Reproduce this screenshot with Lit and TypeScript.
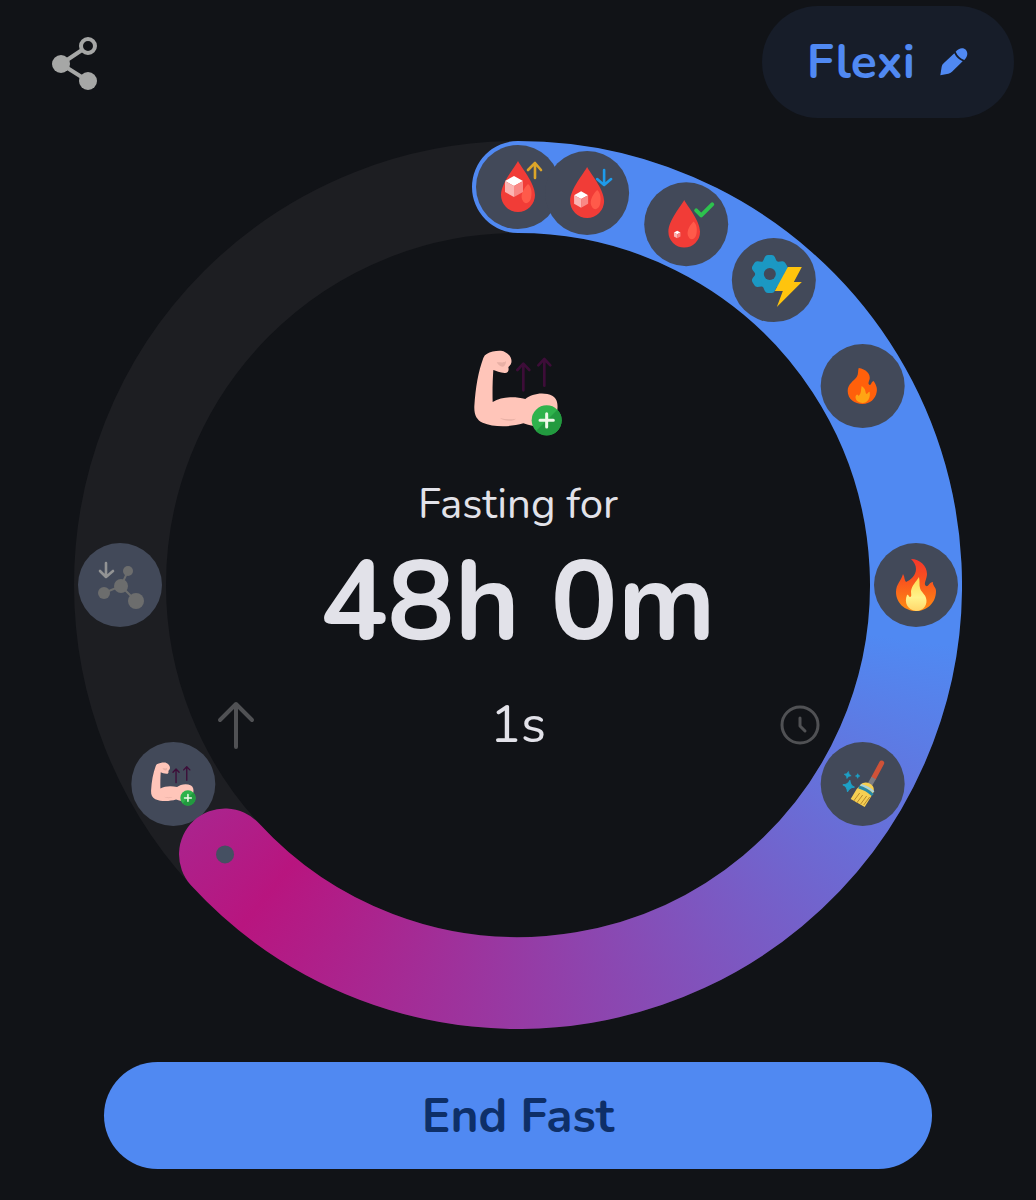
import { LitElement, css, html, svg } from "lit";
import { customElement, property } from "lit/decorators.js";

const RADIUS = 398;
const CENTER = 444;

function pointAt(angle: number) {
  const rad = (angle * Math.PI) / 180;
  return {
    x: CENTER + RADIUS * Math.sin(rad),
    y: CENTER - RADIUS * Math.cos(rad),
  };
}

const drop = svg`
  <path fill="#f13c37" d="M0-26C3-20 17-4 17 8A17 17 0 0 1-17 8C-17-4-3-20 0-26Z" />
  <path fill="#ff5a4a" d="M10-3C14 0 14 7 13 11C12 16 7 18 5 14C2 10 4 3 10-3Z" />
`;

const cube = svg`
  <path fill="#ffffff" d="M0-10L9-5L0 0L-9-5Z" />
  <path fill="#fbb5b3" d="M-9-5L0 0V11L-9 6Z" />
  <path fill="#f98885" d="M9-5L0 0V11L9 6Z" />
`;

const sugarUp = svg`
  ${drop}
  <g transform="translate(-4 -1)">${cube}</g>
  <path class="line" stroke="#dca529" stroke-width="2.6" d="M17-9V-24M10-17L17-24L23-17" />
`;

const sugarDown = svg`
  ${drop}
  <g transform="translate(-6 6) scale(0.78)">${cube}</g>
  <path class="line" stroke="#1e9beb" stroke-width="2.6" d="M17-23V-8M10-14L17-8L24-14" />
`;

const sugarNormal = svg`
  <g transform="translate(-2 0) scale(0.93)">${drop}</g>
  <g transform="translate(-9 10) scale(0.36)">${cube}</g>
  <path class="line" stroke="#2dc24e" stroke-width="4" d="M10-14L15-9L26-20" />
`;

const metabolism = svg`
  <g transform="translate(-4 -6)">
    <circle r="14" fill="#1b98c3" />
    ${[0, 60, 120, 180, 240, 300].map(
      (a) => svg`<path fill="#1b98c3" transform="rotate(${a})" d="M-9-11C-6-13-6-15-5-17Q-4-19-2-19H2Q4-19 5-17C6-15 6-13 9-11Z" />`
    )}
    <circle r="6" fill="#424959" />
  </g>
  <path fill="#ffc40d" d="M14-13H28L20 2H28L3 27L9 11H1Z" />
`;

const smallFire = svg`
  <path fill="#ff600b" d="M-4-18C3-17 8-12 7-7C6-4 5-2 7-1C9-1 8-4 11-5C13-2 15 2 14 6C13 13 7 18 0 18C-8 18-15 13-15 5C-15-2-9-5-6-9C-4-12-5-15-4-18Z" />
  <path fill="#ffa414" d="M-1 0C4 3 2 7 4 8C6 7 6 5 7 6C8 12 5 17 0 17C-5 17-8 13-7 10C-6 8-5 8-4 10C-1 7-2 4-1 0Z" />
`;

const bigFire = svg`
  <path fill="url(#flame)" d="M-5-26C4-26 11-19 11-11C11-6 7-1 10 1C13 2 13-3 17-3C16 0 20 2 20 6C20 18 11 26 0 26C-11 26-20 18-20 7C-20-1-15-4-13-11C-11-8-12-5-10-3C-5-5 0-10 0-16C0-20-2-23-5-26Z" />
  <path fill="url(#flame-core)" d="M3-8C0-3-4 0-5 6C-5 9-4 12-6 12C-8 12-7 9-9 10C-12 17-9 25 0 26C8 26 12 19 10 13C9 9 5 7 4 3C3 0 4-3 3-8Z" />
`;

const star = "M0-6Q1-1 6 0Q1 1 0 6Q-1 1-6 0Q-1-1 0-6Z";

const autophagy = svg`
  <path class="line" stroke="#cf5238" stroke-width="5" d="M19-21L11-6" />
  <path stroke="#7b7b82" stroke-width="5" d="M11-6L7 1" />
  <path fill="#f6cf52" d="M-3 2C0-3 7-2 10 2C12 5 11 8 10 10L2 23L-12 15L-6 5Z" />
  <path stroke="#b98a2d" fill="none" d="M-3 9L-9 17M0 11L-6 19M4 12L-2 20M7 13L1 21" />
  <path stroke="#aad3dc" stroke-width="2" fill="none" d="M-2 1Q6 3 11 8" />
  <path stroke="#2788a8" stroke-width="3" fill="none" d="M-4 3Q4 5 10 11" />
  <g fill="#1da0c6" stroke="#1da0c6">
    <path transform="translate(-14 2) rotate(12)" d=${star} />
    <path transform="translate(-15 -9) rotate(12) scale(0.6)" d=${star} />
    <path transform="translate(-5 -8) scale(0.4)" d=${star} />
  </g>
`;

const muscle = svg`
  <path fill="#ffc5b9" d="M-94-117C-79-127-49-129-41-124C-26-117-17-103-20-91C-22-83-27-81-29-77C-26-67-31-59-40-60C-54-61-66-66-74-69C-76-40-77-5-76 27C-49 12-14 9 22 18C41 3 76-5 104 9C118 17 120 35 118 50L111 100C76 107 41 100 16 91C-24 103-74 103-106 89C-124 81-132 65-131 40C-128-15-119-65-104-105Q-101-114-94-117Z" />
  <path fill="#e8b0a5" d="M-54 75C-38 80-22 80-6 77C-12 85-42 86-54 75ZM-64-92C-60-84-50-76-42-80C-38-84-36-88-36-96C-44-88-54-94-64-92Z" />
  <path class="line" stroke="#3d0d38" stroke-width="8" d="M16-8V-87M-2-69L16-88L34-69M79-22V-101M61-83L79-102L97-83" />
  <circle cx="86" cy="82" r="45" fill="#2fb34c" />
  <path fill="#229a3f" d="M118 50A45 45 0 0 1 54 114Z" />
  <path class="line" stroke="#eff8e9" stroke-width="9" d="M66 82H106M86 62V102" />
`;

const building = svg`<g transform="scale(0.17)">${muscle}</g>`;

const molecule = svg`
  <path stroke="#6c6d6d" stroke-width="2" fill="none" d="M8-14L1 1L-16 8M1 1L16 16" />
  <g fill="#6c6d6d">
    <circle cx="8" cy="-14" r="5" />
    <circle cx="1" cy="1" r="7" />
    <circle cx="-16" cy="8" r="6" />
    <circle cx="16" cy="16" r="8" />
  </g>
  <path class="line" stroke="#929394" stroke-width="2.6" d="M-14-22V-9M-20-14L-14-8L-7-14" />
`;

const stages = [
  { angle: 0, label: "Blood sugar rises", icon: sugarUp },
  { angle: 10, label: "Blood sugar falls", icon: sugarDown },
  { angle: 25, label: "Blood sugar normal", icon: sugarNormal },
  { angle: 40, label: "Metabolism switches", icon: metabolism },
  { angle: 60, label: "Fat burning", icon: smallFire },
  { angle: 90, label: "Ketosis", icon: bigFire },
  { angle: 120, label: "Autophagy", icon: autophagy },
  { angle: 240, label: "Growth hormone", icon: building },
  { angle: 270, label: "Insulin drops", icon: molecule },
];

@customElement("fasting-dial")
export class FastingDial extends LitElement {
  @property({ type: Number }) progress = 227.4;

  static styles = css`
    :host {
      display: grid;
      width: 100%;
      aspect-ratio: 1;
    }

    .ring,
    .content {
      grid-area: 1 / 1;
    }

    .ring {
      display: block;
      width: 100%;
      height: 100%;
    }

    .sweep {
      width: 100%;
      height: 100%;
      background: conic-gradient(
        #5089f2 0deg 98deg,
        #b8157f 219deg,
        #5089f2 340deg
      );
    }

    .line {
      fill: none;
      stroke-linecap: round;
      stroke-linejoin: round;
    }

    .content {
      display: flex;
      flex-direction: column;
      align-items: center;
      justify-content: center;
      padding-bottom: 80px;
      color: #e2e2e9;
    }

    .stage {
      width: 120px;
      height: 120px;
      margin-bottom: 24px;
    }

    p {
      margin: 0;
    }

    .caption {
      font-size: 42px;
      font-weight: 400;
      line-height: 56px;
    }

    .time {
      font-size: 112px;
      font-weight: 700;
      line-height: 140px;
    }

    .row {
      display: grid;
      grid-template-columns: 1fr auto 1fr;
      align-items: center;
      width: 68%;
      margin-top: 20px;
    }

    .seconds {
      font-size: 52px;
      font-weight: 400;
      line-height: 64px;
    }

    button {
      display: flex;
      padding: 0;
      border: 0;
      background: none;
      color: #505154;
      cursor: pointer;
    }

    button:last-child {
      justify-self: end;
    }
  `;

  renderStage(stage: (typeof stages)[number]) {
    const { x, y } = pointAt(stage.angle);
    return svg`<g transform="translate(${x} ${y})" role="img" aria-label=${stage.label}>
      <circle r="42" fill="#424959" />
      ${stage.icon}
    </g>`;
  }

  render() {
    const start = pointAt(0);
    const end = pointAt(this.progress);
    const large = this.progress > 180 ? 1 : 0;
    const arc = `M${start.x} ${start.y}A${RADIUS} ${RADIUS} 0 ${large} 1 ${end.x} ${end.y}`;

    return html`
      <svg class="ring" viewBox="0 0 888 888">
        <defs>
          <mask id="arc" maskUnits="userSpaceOnUse" x="0" y="0" width="888" height="888">
            <path class="line" stroke="#fff" stroke-width="92" d=${arc} />
          </mask>
          <linearGradient id="flame" x1="0" y1="0" x2="0" y2="1">
            <stop offset="0" stop-color="#f5372c" />
            <stop offset="0.4" stop-color="#f9521e" />
            <stop offset="1" stop-color="#ff8d12" />
          </linearGradient>
          <linearGradient id="flame-core" x1="0" y1="0" x2="0" y2="1">
            <stop offset="0" stop-color="#ffd94d" />
            <stop offset="0.6" stop-color="#fff38c" />
            <stop offset="1" stop-color="#ffd66a" />
          </linearGradient>
        </defs>
        <circle cx="444" cy="444" r="398" fill="none" stroke="#1d1e22" stroke-width="92" />
        ${stages.filter((s) => s.angle > this.progress).map((s) => this.renderStage(s))}
        <g mask="url(#arc)">
          <foreignObject width="888" height="888">
            <div class="sweep"></div>
          </foreignObject>
        </g>
        ${stages.filter((s) => s.angle <= this.progress).map((s) => this.renderStage(s))}
        <circle cx=${end.x} cy=${end.y} r="9" fill="#455062" />
      </svg>
      <div class="content">
        <svg class="stage" viewBox="-180 -180 360 360" aria-hidden="true">${muscle}</svg>
        <p class="caption">Fasting for</p>
        <p class="time">48h 0m</p>
        <div class="row">
          <button aria-label="Count up">
            <svg width="40" height="50" viewBox="0 0 40 50">
              <path class="line" stroke="currentColor" stroke-width="4" d="M20 47V4M4 20L20 4L36 20" />
            </svg>
          </button>
          <p class="seconds">1s</p>
          <button aria-label="Fast times">
            <svg width="40" height="40" viewBox="0 0 40 40">
              <circle class="line" stroke="currentColor" stroke-width="3" cx="20" cy="20" r="18" />
              <path class="line" stroke="currentColor" stroke-width="3" d="M20 13V21L25 26" />
            </svg>
          </button>
        </div>
      </div>
    `;
  }
}

@customElement("app-root")
export class AppRoot extends LitElement {
  static styles = css`
    :host {
      display: flex;
      flex-direction: column;
      box-sizing: border-box;
      min-height: 100vh;
      padding-bottom: 30px;
      background-color: #111317;
      font-family: "Nunito", "Open Sans", sans-serif;
    }

    header {
      display: flex;
      align-items: center;
      justify-content: space-between;
      padding: 6px 22px 23px 52px;
    }

    button {
      border: 0;
      font-family: inherit;
      font-size: 48px;
      font-weight: 700;
      cursor: pointer;
    }

    .share {
      display: flex;
      padding: 0;
      background: none;
      color: #a6a7a6;
    }

    .plan {
      display: flex;
      align-items: center;
      gap: 24px;
      height: 112px;
      padding: 0 45px;
      border-radius: 56px;
      background-color: #171d29;
      color: #5089f2;
    }

    main {
      padding: 0 74px;
    }

    footer {
      display: flex;
      padding: 33px 104px 0;
    }

    .end {
      flex: 1;
      height: 107px;
      border-radius: 54px;
      background-color: #5089f2;
      color: #0e2f68;
    }
  `;

  render() {
    return html`
      <header>
        <button class="share" aria-label="Share">
          <svg width="45" height="58" viewBox="0 0 45 58" fill="currentColor">
            <path stroke="currentColor" stroke-width="4" d="M30 17L9 31L36 48" fill="none" />
            <circle cx="36" cy="13" r="7" fill="none" stroke="currentColor" stroke-width="4" />
            <circle cx="9" cy="31" r="9" />
            <circle cx="36" cy="48" r="9" />
          </svg>
        </button>
        <button class="plan">
          Flexi
          <svg width="30" height="30" viewBox="572 140 90 90" fill="currentColor" aria-hidden="true">
            <path d="M576 225L580 199Q581 193 586 189L618 159Q625 175 643 183L611 214Q606 219 600 220Z" />
            <path d="M622 154C631 142 646 140 653 149C660 158 657 170 648 179Q630 172 622 154Z" />
          </svg>
        </button>
      </header>
      <main>
        <fasting-dial></fasting-dial>
      </main>
      <footer>
        <button class="end">End Fast</button>
      </footer>
    `;
  }
}
